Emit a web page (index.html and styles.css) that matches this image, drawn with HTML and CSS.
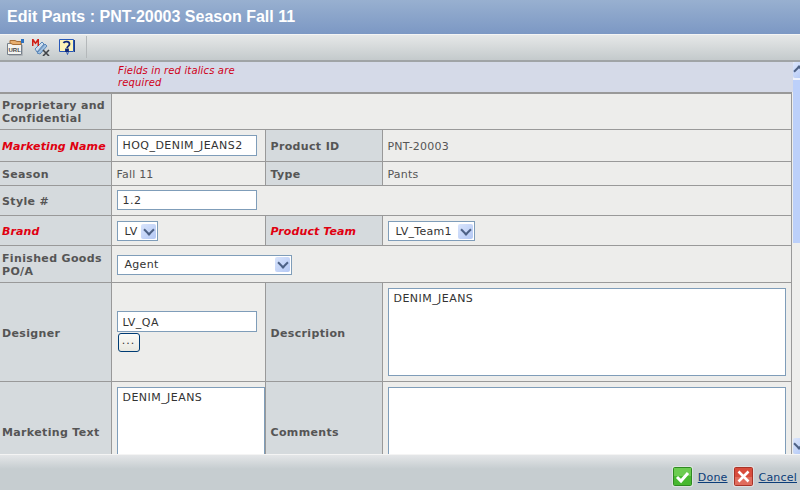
FILE: index.html
```html
<!DOCTYPE html>
<html lang="en">
<head>
    <meta charset="UTF-8">
    <title>Edit Pants</title>
    <link rel="stylesheet" href="styles.css">
</head>
<body>
<div class="title-bar">Edit Pants : PNT-20003 Season Fall 11</div>

<div class="toolbar">
    <svg class="tool" viewBox="0 0 18 18" width="18" height="18">
        <path d="M1.500 5.500h14v11h-14z" fill="#f4f4f0" stroke="#77808a"/>
        <path d="M16.500 7v10.500H3" fill="none" stroke="#b0b4b8"/>
        <path d="M4 5V2.500h5l2 1h4v3H7z" fill="#e8b070" stroke="#a87038"/>
        <path d="M15 1h3v4h-3z" fill="#2a70c0"/>
        <text x="2.500" y="14" class="url-text">URL</text>
    </svg>
    <svg class="tool" viewBox="0 0 18 18" width="18" height="18">
        <path d="M3 11l7-7 2 2-7 8z" fill="#cfe0f0" stroke="#5a86b8"/>
        <path d="M5 15l8-9 2 2-7 8z" fill="#9fc0e0" stroke="#5a86b8"/>
        <path d="M0 8V1h1.500l2 3 2-3H7v7H5.500V4l-2 2.500L1.500 4v4z" fill="#d02018"/>
        <path d="M11 12l6 6M17 12l-6 6" stroke="#404448" stroke-width="1.600"/>
    </svg>
    <svg class="tool" viewBox="0 0 18 18" width="18" height="18">
        <path d="M1.500 1.500h14v12h-5l-1 3-1-3h-7z" fill="#fdf3b8" stroke="#2858b8"/>
        <path d="M16.500 2v12" stroke="#203c80"/>
        <path d="M5.500 5c1-2 6-2 6 1 0 2-2 2-2.500 4M8 11.500h2V13H8z" fill="none" stroke="#102878" stroke-width="1.800"/>
    </svg>
    <span class="tool-sep"></span>
</div>

<div class="main">
    <div class="form-scroll">
        <div class="note-row">
            <span class="note">Fields in red italics are required</span>
        </div>
        <table class="form-table">
            <colgroup>
                <col class="col-a"><col class="col-b"><col class="col-c"><col class="col-d">
            </colgroup>
            <tr class="r-prop">
                <th>Proprietary and Confidential</th>
                <td colspan="3"></td>
            </tr>
            <tr class="r-name">
                <th class="req">Marketing Name</th>
                <td class="cell-input"><input class="field" type="text" value="HOQ_DENIM_JEANS2"></td>
                <th>Product ID</th>
                <td>PNT-20003</td>
            </tr>
            <tr class="r-season">
                <th>Season</th>
                <td>Fall 11</td>
                <th>Type</th>
                <td>Pants</td>
            </tr>
            <tr class="r-style">
                <th>Style #</th>
                <td class="cell-input" colspan="3"><input class="field field-short" type="text" value="1.2"></td>
            </tr>
            <tr class="r-brand">
                <th class="req">Brand</th>
                <td>
                    <div class="select sel-brand"><span>LV</span><i class="arrow"></i></div>
                </td>
                <th class="req">Product Team</th>
                <td>
                    <div class="select sel-team"><span>LV_Team1</span><i class="arrow"></i></div>
                </td>
            </tr>
            <tr class="r-goods">
                <th>Finished Goods PO/A</th>
                <td colspan="3">
                    <div class="select sel-agent"><span>Agent</span><i class="arrow"></i></div>
                </td>
            </tr>
            <tr class="r-designer">
                <th>Designer</th>
                <td>
                    <input class="field" type="text" value="LV_QA">
                    <button class="dots" type="button">...</button>
                </td>
                <th>Description</th>
                <td><textarea class="area area-wide">DENIM_JEANS</textarea></td>
            </tr>
            <tr class="r-text">
                <th>Marketing Text</th>
                <td><textarea class="area area-narrow">DENIM_JEANS</textarea></td>
                <th>Comments</th>
                <td><textarea class="area area-wide"></textarea></td>
            </tr>
        </table>
    </div>
    <div class="scrollbar">
        <div class="sb-btn"><i class="sb-up"></i></div>
        <div class="sb-thumb"></div>
        <div class="sb-track"></div>
        <div class="sb-btn"><i class="sb-down"></i></div>
    </div>
</div>

<div class="footer">
    <svg class="f-icon" viewBox="0 0 21 21" width="21" height="21">
        <rect x="0.500" y="0.500" width="20" height="20" rx="1" fill="#f0f4ee"/>
        <rect x="1.500" y="1.500" width="18" height="18" rx="1" fill="#48b830" stroke="#2f8a22"/>
        <path d="M2 2h17v8H2z" fill="#6ccc50"/>
        <path d="M5 11l4 4 7-8" fill="none" stroke="#fff" stroke-width="3"/>
    </svg>
    <a class="f-link f-done" href="#">Done</a>
    <svg class="f-icon" viewBox="0 0 21 21" width="21" height="21">
        <rect x="0.500" y="0.500" width="20" height="20" rx="1" fill="#f4eeee"/>
        <rect x="1.500" y="1.500" width="18" height="18" rx="1" fill="#d84c3c" stroke="#a83428"/>
        <path d="M2 11h17v8H2z" fill="#e06c5c"/>
        <path d="M5.500 5.500l10 10M15.500 5.500l-10 10" stroke="#fff" stroke-width="2.600"/>
    </svg>
    <a class="f-link" href="#">Cancel</a>
</div>
</body>
</html>
```

FILE: styles.css
```css
* {
    box-sizing: border-box;
}

html, body {
    height: 100%;
}

body {
    margin: 0;
    display: flex;
    flex-direction: column;
    overflow: hidden;
    font-family: "DejaVu Sans", sans-serif;
    font-size: 11px;
    color: #555;
    background: #eeeeec;
}

.title-bar {
    height: 35px;
    padding: 8px 0 0 7px;
    font-family: "Liberation Sans", sans-serif;
    font-size: 16px;
    font-weight: bold;
    color: #fff;
    background: linear-gradient(#98b0d0, #7c98c4);
    border-bottom: 1px solid #f4f4f4;
}

.toolbar {
    height: 27px;
    display: flex;
    align-items: center;
    padding: 0 0 1px 6px;
    gap: 8px;
    background: linear-gradient(#e6e8e8, #c4cacc);
    border-bottom: 2px solid #a0a4a6;
}

.tool {
    flex: none;
}

.url-text {
    font-family: "Liberation Sans", sans-serif;
    font-size: 6px;
    font-weight: bold;
    fill: #444;
}

.tool-sep {
    width: 1px;
    height: 22px;
    margin-left: 2px;
    background: #b4b8ba;
}

.main {
    flex: 1;
    min-height: 0;
    display: flex;
}

.form-scroll {
    flex: 1;
    min-width: 0;
    overflow: hidden;
}

.note-row {
    height: 30px;
    padding: 3px 0 0 118px;
    background: #d5dae8;
    line-height: 12px;
}

.note {
    display: block;
    width: 125px;
    font-size: 10px;
    font-style: italic;
    letter-spacing: 0.15px;
    color: #d00018;
}

.form-table {
    width: 792px;
    table-layout: fixed;
    border-collapse: collapse;
    border-top: 2px solid #999;
}

.col-a { width: 111px; }
.col-b { width: 154px; }
.col-c { width: 117px; }

.form-table th, .form-table td {
    border: solid #999;
    border-width: 0 1px 1px 0;
    font-size: 11px;
    line-height: 13px;
    text-align: left;
    vertical-align: middle;
}

.form-table td {
    padding: 2px 0 0 5px;
    letter-spacing: 0.2px;
    background: #ededeb;
}

.form-table th {
    padding: 2px 2px 0;
    font-weight: bold;
    letter-spacing: 0.35px;
    background: #d5dadd;
    color: #555;
}

.form-table td + th {
    padding-left: 5px;
}

.form-table th.req {
    font-style: italic;
    letter-spacing: 0.1px;
    color: #e00010;
}

.form-table td.cell-input {
    padding-top: 0;
}

.r-prop { height: 36px; }
.r-name { height: 32px; }
.r-season { height: 24px; }
.r-style { height: 30px; }
.r-brand { height: 30px; }
.r-goods { height: 37px; }
.r-designer { height: 99px; }
.r-text { height: 100px; }

.form-table .r-designer td, .form-table .r-text td {
    padding-top: 5px;
    padding-bottom: 5px;
}

.form-table .r-designer th {
    padding-top: 4px;
}

.field {
    display: block;
    width: 140px;
    height: 21px;
    padding: 1px 4px 0 5px;
    font-family: "DejaVu Sans", sans-serif;
    font-size: 11px;
    letter-spacing: 0.45px;
    color: #333;
    background: #fff;
    border: 1px solid #7f9db9;
    outline: none;
}

.field-short {
    height: 20px;
}

.dots {
    display: block;
    width: 22px;
    height: 19px;
    margin: 1px 0 0 1px;
    padding: 0 0 4px;
    font-family: "DejaVu Sans", sans-serif;
    font-size: 11px;
    letter-spacing: 1px;
    color: #333;
    background: linear-gradient(#fbfbf8, #e8e8e0);
    border: 1px solid #003c74;
    border-radius: 3px;
}

.select {
    display: flex;
    align-items: center;
    justify-content: space-between;
    height: 20px;
    padding: 0 1px 0 7px;
    letter-spacing: 0.3px;
    color: #333;
    background: #fff;
    border: 1px solid #7f9db9;
}

.sel-brand { width: 41px; }
.sel-team { width: 87px; }
.sel-agent { width: 175px; }

.arrow {
    position: relative;
    flex: none;
    width: 15px;
    height: 15px;
    background: linear-gradient(135deg, #d8e4fc, #b4c8f4);
    border-radius: 2px;
}

.arrow::after {
    content: "";
    position: absolute;
    left: 4px;
    top: 2px;
    width: 6px;
    height: 6px;
    border: solid #4d6185;
    border-width: 0 2px 2px 0;
    transform: rotate(45deg);
}

.area {
    display: block;
    padding: 3px 4px 2px 5px;
    font-family: "DejaVu Sans", sans-serif;
    font-size: 11px;
    line-height: 14px;
    letter-spacing: 0.45px;
    color: #333;
    background: #fff;
    border: 1px solid #7f9db9;
    resize: none;
    overflow: hidden;
    outline: none;
}

.area-wide {
    width: 398px;
    height: 88px;
}

.area-narrow {
    width: 148px;
    height: 88px;
}

.scrollbar {
    flex: none;
    width: 7px;
    display: flex;
    flex-direction: column;
    background: #eeeeec;
}

.sb-btn {
    position: relative;
    height: 16px;
    flex: none;
    overflow: hidden;
    background: linear-gradient(135deg, #dce6fc, #b8ccf6);
    border-radius: 2px 0 0 2px;
}

.sb-up, .sb-down {
    position: absolute;
    left: 2px;
    width: 8px;
    height: 8px;
    border: solid #4d6185;
    transform: rotate(45deg);
}

.sb-up {
    top: 5px;
    border-width: 2px 0 0 2px;
}

.sb-down {
    top: 2px;
    border-width: 0 2px 2px 0;
}

.sb-thumb {
    height: 165px;
    flex: none;
    background: #bcd0fa;
    border-top: 2px solid #eef2fc;
}

.sb-track {
    flex: 1;
}

.footer {
    height: 36px;
    flex: none;
    display: flex;
    align-items: flex-end;
    justify-content: flex-end;
    padding: 0 3px 3px 0;
    background: linear-gradient(#e4e6e8, #c6cdd0 40%);
    border-top: 1px solid #f4f4f4;
}

.f-icon {
    flex: none;
}

.f-link {
    margin: 0 0 3px 5px;
    font-size: 11px;
    letter-spacing: 0.2px;
    color: #0b3d78;
}

.f-done {
    margin-right: 5px;
}
```
